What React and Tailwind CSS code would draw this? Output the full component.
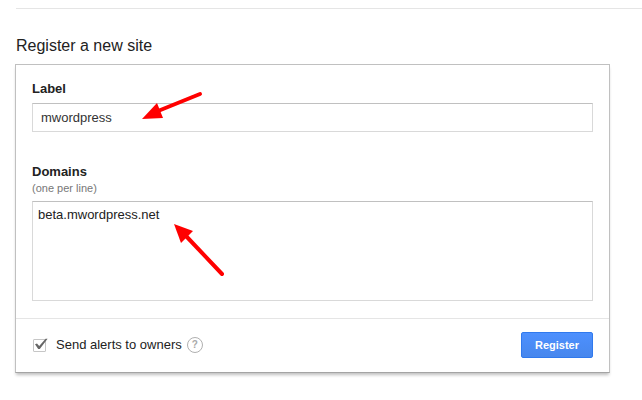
import { useState } from 'react';

export default function App() {
  const [label, setLabel] = useState('mwordpress');
  const [domains, setDomains] = useState('beta.mwordpress.net');
  const [sendAlerts, setSendAlerts] = useState(true);

  return (
    <main className="min-h-screen bg-white pt-2 pb-6 pl-[15px] font-['Liberation_Sans',Arial,sans-serif] text-[13px] leading-4 text-[#222]">
      <hr className="ml-px border-t border-[#e5e5e5]" />

      <div className="mr-8 pt-[27px]">
        <h1 className="mb-2 pl-px text-base leading-5">Register a new site</h1>

        <form
          onSubmit={(e) => e.preventDefault()}
          className="border border-[#c0c0c0] border-b-[#a4a4a4] bg-white shadow-[0_3px_3px_-1px_rgba(0,0,0,0.25)]"
        >
          <div className="px-4 pt-4 pb-[17px]">
            {/* Label */}
            <div className="relative mb-8">
              <label htmlFor="site-label" className="mb-[6px] block font-bold">
                Label
              </label>
              <input
                id="site-label"
                type="text"
                value={label}
                onChange={(e) => setLabel(e.target.value)}
                className="block h-[29px] w-full border border-[#d9d9d9] border-t-[#c0c0c0] px-2 text-[#333] outline-none"
              />
              <LabelArrow />
            </div>

            {/* Domains */}
            <div className="relative">
              <label htmlFor="site-domains" className="block font-bold">
                Domains
              </label>
              <p id="domains-hint" className="mb-[5px] text-[11px] leading-4 text-[#777]">
                (one per line)
              </p>
              <textarea
                id="site-domains"
                aria-describedby="domains-hint"
                value={domains}
                onChange={(e) => setDomains(e.target.value)}
                className="block h-[100px] w-full resize-none border border-[#d9d9d9] border-t-[#c0c0c0] px-[5px] py-[5px] outline-none"
              />
              <DomainsArrow />
            </div>
          </div>

          {/* Footer */}
          <div className="flex items-center justify-between border-t border-[#e5e5e5] px-4 pt-[13px] pb-[14px]">
            <div className="flex items-center">
              <label className="flex items-center">
                <span className="relative mr-[10px] ml-px block size-[13px]">
                  <input
                    type="checkbox"
                    checked={sendAlerts}
                    onChange={(e) => setSendAlerts(e.target.checked)}
                    className="block size-[13px] appearance-none rounded-[1px] border border-[#c6c6c6] bg-white"
                  />
                  {sendAlerts && <CheckMark />}
                </span>
                Send alerts to owners
              </label>
              <button
                type="button"
                aria-label="About owner alerts"
                className="ml-[5px] flex size-4 items-center justify-center rounded-full border border-[#b0b0b0] text-[10px] leading-none font-bold text-[#aaa]"
              >
                ?
              </button>
            </div>
            <button
              type="submit"
              className="h-[26px] min-w-[72px] rounded-[2px] border border-[#3079ed] bg-linear-to-b from-[#4d90fe] to-[#4787ed] px-2 text-[11px] font-bold text-white"
            >
              Register
            </button>
          </div>
        </form>
      </div>
    </main>
  );
}

function CheckMark() {
  return (
    <svg
      className="pointer-events-none absolute -top-px left-0"
      width="15"
      height="14"
      viewBox="0 0 15 14"
      aria-hidden="true"
    >
      <path d="M2 6.3 L4 5.4 L6.2 8 L12.6 0.8 L14.6 0.8 L6.8 11 L5.2 11 Z" fill="#666" />
    </svg>
  );
}

function LabelArrow() {
  return (
    <svg
      className="pointer-events-none absolute top-2 left-[108px]"
      width="64"
      height="34"
      viewBox="0 0 64 34"
      aria-hidden="true"
    >
      <path d="M18 22 L60 5" stroke="#f00" strokeWidth="4" strokeLinecap="round" />
      <path d="M2 30 L17 14 L23 29 Z" fill="#f00" />
    </svg>
  );
}

function DomainsArrow() {
  return (
    <svg
      className="pointer-events-none absolute top-[58px] left-[140px]"
      width="56"
      height="56"
      viewBox="0 0 56 56"
      aria-hidden="true"
    >
      <path d="M14 14 L50 52" stroke="#f00" strokeWidth="4" strokeLinecap="round" />
      <path d="M2 2 L21 9 L9 21 Z" fill="#f00" />
    </svg>
  );
}
